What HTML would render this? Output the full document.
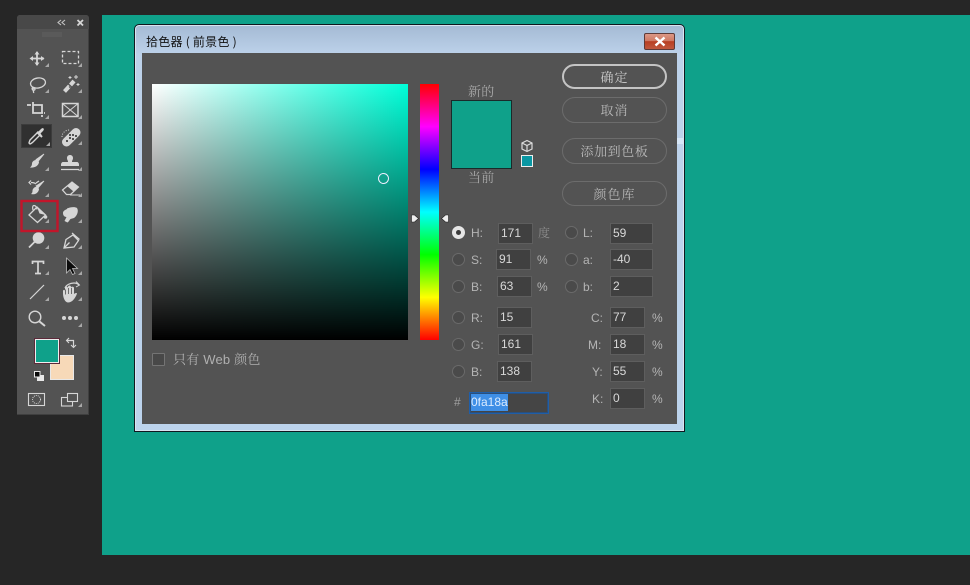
<!DOCTYPE html>
<html><head><meta charset="utf-8">
<style>
html,body{margin:0;padding:0;width:970px;height:585px;overflow:hidden;background:#262626}
*{box-sizing:border-box}
.a{position:absolute}
.t{position:absolute;font:12px/14px "Liberation Sans","Noto Sans CJK SC",sans-serif;color:#b4b4b4;white-space:nowrap}
.f{position:absolute;background:#404040;border:1px solid #5e5e5e;font:12px/19px "Liberation Sans",sans-serif;color:#d8d8d8;padding-left:2px;height:21px}
.r{position:absolute;width:13px;height:13px;border-radius:50%;border:1px solid #6a6a6a;background:#4a4a4a}
.b{position:absolute;left:562px;width:105px;border:1px solid #6c6c6c;border-radius:13px;text-align:center;font:13px/24px "Noto Serif CJK SC",serif;letter-spacing:.6px;color:#b8b8b8}
.s{position:absolute;font:13px/15px "Noto Serif CJK SC",serif;letter-spacing:.3px;color:#a8a8a8;white-space:nowrap}
</style></head><body>
<div class="a" style="left:102px;top:15px;width:868px;height:540px;background:#0fa18a"></div>

<!-- toolbar -->
<div class="a" style="left:17px;top:15px;width:72px;height:400px;background:#535353;border-radius:3px 3px 0 0;border-right:1px solid #3f3f3f;border-bottom:1px solid #3f3f3f"></div>
<div class="a" style="left:17px;top:15px;width:72px;height:14px;background:#484848;border-radius:3px 3px 0 0"></div>
<div class="a" style="left:21px;top:124px;width:31px;height:24px;background:#303030;border:1px solid #3c3c3c"></div>
<svg class="a" style="left:0;top:0" width="100" height="420" viewBox="0 0 100 420" fill="none" stroke="#d6d6d6" stroke-width="1.300">
 <!-- header -->
 <path d="M61 20l-3 2.500 3 2.500M65 20l-3 2.500 3 2.500" stroke="#c4c4c4" stroke-width="1.100"/>
 <path d="M77.500 20l5.500 5.500M83 20l-5.500 5.500" stroke-width="1.800"/>
 <path d="M43 32v5M45 32v5M47 32v5M49 32v5M51 32v5M53 32v5M55 32v5M57 32v5M59 32v5M61 32v5" stroke="#6a6a6a" stroke-width=".7"/>
 <!-- move -->
 <path d="M37 52v13M31 58.500h13" stroke-width="1.800"/>
 <path d="M34.500 54.500l2.500-3.500 2.500 3.500zM34.500 62.500l2.500 3.500 2.500-3.500zM33 56l-3.500 2.500 3.500 2.500zM41 56l3.500 2.500-3.500 2.500z" fill="#d6d6d6" stroke="none"/>
 <!-- marquee -->
 <rect x="62.500" y="51.500" width="16" height="12" stroke-dasharray="3 2"/>
 <!-- lasso -->
 <ellipse cx="38" cy="83" rx="7.500" ry="5" transform="rotate(-10 38 83)"/>
 <path d="M33 87c-2 2 0 4 1.500 3s-1-3-1.500-1c0 2 1 3 .5 4"/>
 <!-- wand -->
 <path d="M64.500 91.500l5-5.500" stroke-width="4"/><path d="M70.500 85l3.500-4" stroke-width="4"/><path d="M69 86.500l1.500 1.500" stroke="#535353" stroke-width="1"/>
 <path d="M70 76v3M68.500 77.500h3M76 75v4M74 77h4M78 83v3M76.500 84.500h3" stroke-width="1"/>
 <!-- crop -->
 <path d="M27 105h4M33 102v11h10M33 105h9v8M42 115v2M45 113h-1" stroke-width="1.800"/>
 <!-- frame -->
 <rect x="62.500" y="103.500" width="15.500" height="13" stroke-width="1.500"/>
 <path d="M63 104l14.500 12M77.500 104l-14.500 12" stroke-width="1"/>
 <!-- eyedropper -->
 <path d="M29.500 141.500c-1 1.500 0 3 1.500 2l1.500-1 8-8-2.500-2.500-8 8z" stroke-width="1.400"/>
 <path d="M37 132l5 5" stroke-width="2"/><path d="M40 134l3-3c2-2 0-4-2-2l-2.500 2.500z" fill="#d6d6d6" stroke="none"/>
 <!-- bandage -->
 <path d="M66.500 142l9.500-9.500" stroke-width="9" stroke-linecap="round"/>
 <g fill="#535353" stroke="none"><rect x="69" y="137" width="2" height="2"/><rect x="72" y="134" width="2" height="2"/><rect x="72" y="138" width="2" height="2"/><rect x="68" y="133.500" width="0" height="0"/><rect x="75" y="135" width="2" height="2"/><rect x="69" y="134" width="2" height="2"/><rect x="66" y="140" width="2" height="2"/></g>
 <path d="M62 137c0-4 3-7 8-7" stroke-dasharray="1 1.500" stroke-width="1"/>
 <!-- brush -->
 <path d="M44 154l-6 7.500-2-2z" fill="#d6d6d6" stroke="#d6d6d6" stroke-width=".8"/>
 <path d="M35.500 160c2-.5 3.500 1 3.500 2.500-1 4-5 5.500-9 5 1.500-1 2-2.500 2-4s1.500-3 3.500-3.500z" fill="#d6d6d6" stroke="none"/>
 <!-- stamp -->
 <path d="M67 158c0-4 6-4 6 0 0 2-1 2-1 4h5c1 0 2 1 2 2.500v1.500H61v-1.500c0-1.500 1-2.500 2-2.500h5c0-2-1-2-1-4z" fill="#d6d6d6" stroke="none"/>
 <path d="M61 169.500h18" stroke-width="1.300"/>
 <!-- history brush -->
 <path d="M44 181l-6 7-2-2z" fill="#d6d6d6" stroke="#d6d6d6" stroke-width=".8"/>
 <path d="M35.500 187c2-.5 3.500 1 3.500 2.500-1 4-4.500 5.500-8 4.500 1.500-1 1.500-2.500 1.500-3.500s1-3 3-3.500z" fill="#d6d6d6" stroke="none"/>
 <path d="M36 184c-1.500-1.500-3-1.500-5-1.500M31 180.500l-2 2 2 2M36 183l3-2" stroke-width="1.200"/>
 <!-- eraser -->
 <path d="M62.500 190l9.500-8 6.500 5-8 7.500h-4z" stroke-width="1.200"/><path d="M72 182l6.500 5-5 4.500-6.500-5.500z" fill="#d6d6d6" stroke="none"/>
 <path d="M70 195h10" stroke-width="1"/>
 <!-- bucket -->
 <path d="M29 215l8-8 8.500 8-8 7.500z" stroke-width="1.300"/>
 <path d="M33 210c-1-3 0-4.500 1-4.500s2.500 1 3 4" stroke-width="1.200"/>
 <path d="M37 207l8.500 8-6-1.500z" fill="#d6d6d6" stroke="none"/><circle cx="45.500" cy="217" r="1.800" fill="#d6d6d6" stroke="none"/>
 <!-- smudge -->
 <path d="M67 208.500c3-1.500 8-2 10-.5 2 3 0 8-3 10l-3.500 1c-1 1-2 3-3 3.500l-3-1.500 2-4c-2.500 0-3.500-2-3.500-4s2-3 4-4z" fill="#d6d6d6" stroke="none"/>
 <!-- dodge -->
 <circle cx="38.500" cy="238" r="5.800" fill="#d6d6d6" stroke="none"/><path d="M34.500 242l-5.500 5.500" stroke-width="1.800"/>
 <!-- pen -->
 <path d="M64 248l2-8.500 7-4.500 5.500 5.500-4.500 6.500z" stroke-width="1.300"/><path d="M72 233l7.500 6.500M64 248l5.500-5.500" stroke-width="1.300"/>
 <!-- type -->
 <path d="M32.500 264v-2.500h11v2.500M38 261.500v12.500M35 273.500h6" stroke-width="1.700"/>
 <!-- path select -->
 <path d="M66.500 258v15l3.500-3.500 2.500 5 2.500-1-2.500-5h5z" fill="#0c0c0c" stroke="#bdbdbd" stroke-width=".8"/>
 <!-- line -->
 <path d="M30 299l14-14" stroke-width="1.200"/>
 <!-- hand rotate -->
 <path d="M65 288c1-3 5-5 9-5 2 0 4 1 5 2" stroke-width="1.200"/><path d="M76 281.500l3.500 3.500-3.500 2" stroke-width="1"/>
 <path d="M63 294v-3c0-1.500 2-1.500 2 0v-3c0-2 3-2 3 0v-1c0-2 3-2 3 0v1c0-2 3-1.500 3 0v6c1-1 2.500-1.500 3-.5-1 3-4 9-9 9-3 0-5-5-5-9z" fill="#d6d6d6" stroke="none"/>
 <path d="M65.500 289.500v5M68.500 288v6M71.500 288v6" stroke="#535353" stroke-width=".8"/>
 <!-- zoom -->
 <circle cx="35" cy="317" r="5.800" stroke-width="1.400"/><path d="M39.500 321.500l5.500 4.500" stroke-width="2"/>
 <!-- more -->
 <circle cx="64" cy="318" r="2" fill="#d6d6d6" stroke="none"/><circle cx="70" cy="318" r="2" fill="#d6d6d6" stroke="none"/><circle cx="76" cy="318" r="2" fill="#d6d6d6" stroke="none"/>
 <!-- corner triangles -->
 <g fill="#a8a8a8" stroke="none">
  <path d="M49 67v-4l-4 4zM82 67v-4l-4 4zM49 93v-4l-4 4zM82 93v-4l-4 4zM49 119v-4l-4 4zM82 119v-4l-4 4zM50 146v-4l-4 4zM82 145v-4l-4 4zM49 171v-4l-4 4zM82 171v-4l-4 4zM49 197v-4l-4 4zM82 197v-4l-4 4zM49 223v-4l-4 4zM82 223v-4l-4 4zM49 249v-4l-4 4zM82 249v-4l-4 4zM49 275v-4l-4 4zM82 275v-4l-4 4zM49 301v-4l-4 4zM82 301v-4l-4 4zM82 327v-4l-4 4zM82 407v-4l-4 4z"/>
 </g>
 <!-- red highlight -->
 <rect x="21.500" y="201" width="36" height="30" stroke="#c2152a" stroke-width="2.400"/>
 <!-- swap -->
 <path d="M67 340.500h6.500v6" stroke-width="1.200"/><path d="M69 338l-2.500 2.500 2.500 2.500M71 345l2.500 2.500 2.500-2.500" stroke-width="1.100"/>
 <!-- default colours -->
 <rect x="37" y="375" width="7" height="6" fill="#e8e8e8" stroke="none"/><rect x="34.500" y="371.500" width="5.500" height="5.500" fill="#0b0b0b" stroke="#e8e8e8" stroke-width="1"/>
 <!-- mask & screen -->
 <rect x="28.500" y="393.500" width="16" height="12" stroke-width="1.100"/><circle cx="36.500" cy="399.500" r="4" stroke-dasharray="1 1" stroke-width="1"/>
 <rect x="61.500" y="397.500" width="11" height="8.500" stroke-width="1.100"/><rect x="67.500" y="393.500" width="10" height="8" fill="#535353" stroke-width="1.100"/>
</svg>
<div class="a" style="left:50px;top:355px;width:24px;height:25px;background:#f7d9b8;border:1px solid #e8e8e8"></div>
<div class="a" style="left:35px;top:339px;width:24px;height:24px;background:#0fa18a;border:1px solid #eee;outline:1px solid #5c2a3a"></div>

<!-- dialog -->
<div class="a" style="left:134px;top:24px;width:551px;height:408px;border:1px solid #101820;border-radius:5px 5px 0 0;background:linear-gradient(#a4bad4,#bdd2ea 30px,#bcd3ec);box-shadow:inset 0 0 0 1px #d8e4f0"></div>
<div class="t" style="left:146px;top:35px;color:#111;letter-spacing:.25px;font-family:'WenQuanYi Zen Hei','Noto Sans CJK SC',sans-serif">拾色器 ( 前景色 )</div>
<div class="a" style="left:644px;top:33px;width:31px;height:17px;border:1px solid #5e3b38;border-radius:2px;background:linear-gradient(#dc9886,#cf7a64 45%,#b83f22 50%,#c0583e)"></div>
<svg class="a" style="left:652px;top:36px" width="16" height="11"><path d="M3.500 1.500l9 8M12.500 1.500l-9 8" stroke="#fff" stroke-width="2.400"/></svg>
<div class="a" style="left:142px;top:53px;width:535px;height:371px;background:#535353"></div>

<!-- colour field -->
<div class="a" style="left:152px;top:84px;width:256px;height:256px;background:linear-gradient(to bottom,rgba(0,0,0,0),#000),linear-gradient(to right,#fff,#00ffd9)"></div>
<svg class="a" style="left:376px;top:171px" width="15" height="15"><circle cx="7.500" cy="7.500" r="5" fill="none" stroke="#eef" stroke-width="1"/></svg>
<div class="a" style="left:420px;top:84px;width:19px;height:256px;background:linear-gradient(to bottom,#f00 0%,#f0f 16.67%,#00f 33.33%,#0ff 50%,#0f0 66.67%,#ff0 83.33%,#f00 100%)"></div>
<svg class="a" style="left:409px;top:212px" width="42" height="13"><path d="M2.500 3h3l4 3.500-4 3.500h-3zM39.500 3h-3l-4 3.500 4 3.500h3z" fill="#eee" stroke="#222" stroke-width=".6"/></svg>

<!-- swatch -->
<div class="s" style="left:468px;top:83px">新的</div>
<div class="a" style="left:451px;top:100px;width:61px;height:69px;background:#0fa18a;border:1px solid #1a2a2a"></div>
<div class="s" style="left:468px;top:169px">当前</div>
<svg class="a" style="left:520px;top:139px" width="14" height="14" fill="#535353" stroke="#ddd" stroke-width="1.200"><path d="M7 1.500l5 2.500v6l-5 2.500-5-2.500V4zM2 4l5 2.500L12 4M7 6.500v6"/></svg>
<div class="a" style="left:521px;top:155px;width:12px;height:12px;background:#0a97a3;border:1px solid #eee"></div>

<!-- buttons -->
<div class="b" style="top:64px;height:25px;border:2px solid #c4c4c4;line-height:21px;color:#cfcfcf;letter-spacing:1px">确定</div>
<div class="b" style="top:97px;height:26px;letter-spacing:1px">取消</div>
<div class="b" style="top:138px;height:26px">添加到色板</div>
<div class="b" style="top:181px;height:25px;line-height:23px;letter-spacing:1px">颜色库</div>

<!-- HSB -->
<div class="r" style="left:452px;top:226px;background:#e6e6e6;border-color:#e6e6e6"></div>
<div class="a" style="left:456px;top:230px;width:5px;height:5px;border-radius:50%;background:#3a3a3a"></div>
<div class="r" style="left:452px;top:253px"></div><div class="r" style="left:452px;top:280px"></div>
<div class="r" style="left:452px;top:311px"></div><div class="r" style="left:452px;top:338px"></div><div class="r" style="left:452px;top:365px"></div>
<div class="r" style="left:565px;top:226px"></div><div class="r" style="left:565px;top:253px"></div><div class="r" style="left:565px;top:280px"></div>

<div class="t" style="left:471px;top:226px">H:</div><div class="t" style="left:471px;top:253px">S:</div><div class="t" style="left:471px;top:280px">B:</div>
<div class="t" style="left:471px;top:311px">R:</div><div class="t" style="left:471px;top:338px">G:</div><div class="t" style="left:471px;top:365px">B:</div>
<div class="t" style="left:583px;top:226px">L:</div><div class="t" style="left:583px;top:253px">a:</div><div class="t" style="left:583px;top:280px">b:</div>
<div class="t" style="left:591px;top:311px">C:</div><div class="t" style="left:588px;top:338px">M:</div><div class="t" style="left:592px;top:365px">Y:</div><div class="t" style="left:592px;top:392px">K:</div>

<div class="f" style="left:498px;top:223px;width:35px">171</div>
<div class="f" style="left:496px;top:249px;width:35px">91</div>
<div class="f" style="left:497px;top:276px;width:35px">63</div>
<div class="f" style="left:497px;top:307px;width:35px">15</div>
<div class="f" style="left:498px;top:334px;width:35px">161</div>
<div class="f" style="left:497px;top:361px;width:35px">138</div>
<div class="f" style="left:610px;top:223px;width:43px">59</div>
<div class="f" style="left:610px;top:249px;width:43px">-40</div>
<div class="f" style="left:610px;top:276px;width:43px">2</div>
<div class="f" style="left:610px;top:307px;width:35px">77</div>
<div class="f" style="left:610px;top:334px;width:35px">18</div>
<div class="f" style="left:610px;top:361px;width:35px">55</div>
<div class="f" style="left:610px;top:388px;width:35px">0</div>

<div class="t" style="left:538px;top:226px;color:#8f8f8f;font-family:'Noto Serif CJK SC',serif">度</div>
<div class="t" style="left:537px;top:253px">%</div><div class="t" style="left:537px;top:280px">%</div>
<div class="t" style="left:652px;top:311px">%</div><div class="t" style="left:652px;top:338px">%</div><div class="t" style="left:652px;top:365px">%</div><div class="t" style="left:652px;top:392px">%</div>

<div class="t" style="left:454px;top:395px;color:#a0a0a0">#</div>
<div class="a" style="left:469px;top:392px;width:80px;height:22px;background:#454545;border:1px solid #1f5ea8;box-shadow:inset 0 0 0 1px #2a4f7c"></div>
<div class="a" style="left:471px;top:394px;width:37px;height:17px;background:#3f8fe6"></div>
<div class="t" style="left:471px;top:395px;color:#dcecff">0fa18a</div>

<!-- web only -->
<div class="a" style="left:152px;top:353px;width:13px;height:13px;background:#484848;border:1px solid #747474;border-radius:1px"></div>
<div class="t" style="left:173px;top:353px;font-size:13px;letter-spacing:.2px;color:#b0b0b0;font-family:'Liberation Sans','Noto Serif CJK SC',serif">只有 Web 颜色</div>

<!-- scrollbar hint -->
<div class="a" style="left:677px;top:138px;width:6px;height:6px;background:#d6e6f6"></div>
</body></html>
